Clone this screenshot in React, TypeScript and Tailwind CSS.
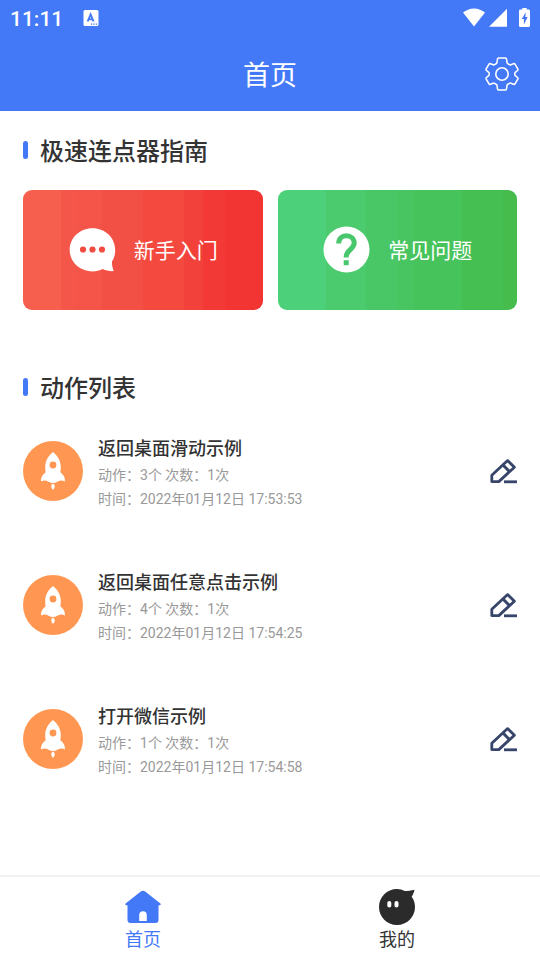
import { useState } from "react";

type Action = {
  id: number;
  title: string;
  steps: number;
  times: number;
  date: string;
};

const actions: Action[] = [
  { id: 1, title: "返回桌面滑动示例", steps: 3, times: 1, date: "2022年01月12日 17:53:53" },
  { id: 2, title: "返回桌面任意点击示例", steps: 4, times: 1, date: "2022年01月12日 17:54:25" },
  { id: 3, title: "打开微信示例", steps: 1, times: 1, date: "2022年01月12日 17:54:58" },
];

function StatusBar() {
  return (
    <div className="flex h-9 items-center justify-between px-2.5">
      <div className="flex items-center gap-5">
        <span className="pt-0.5 text-[21px] leading-8 font-medium">11:11</span>
        <svg className="h-4 w-4" viewBox="0 0 16 16">
          <rect x="0.5" width="15" height="16" rx="1.5" fill="#fff" />
          <path
            d="M4.6 11.5 7.6 4.5 10.6 11.5M5.6 9.4h4"
            fill="none"
            stroke="#4379f6"
            strokeWidth="1.9"
          />
          <path d="M8 13.6h1.3v1.2H8zM10.4 13.6h1.3v1.2h-1.3zM12.8 13.6h1.3v1.2h-1.3z" fill="#4379f6" />
        </svg>
      </div>
      <div className="flex items-center">
        <svg className="mr-1 h-5 w-[22px]" viewBox="0 0 22 20" fill="#fff">
          <path d="M11 18.600 0 4.600C3 2 6.700.4 11 .4s8 1.600 11 4.200z" />
        </svg>
        <svg className="mr-3 h-5 w-[18px]" viewBox="0 0 18 20" fill="#fff">
          <path d="M18 .8v18H0z" />
        </svg>
        <svg className="h-5 w-[11px]" viewBox="0 0 11 20">
          <path
            d="M3.300 0h4.400v1.500h2q1.300 0 1.300 1.300v14.900q0 1.300-1.300 1.300H1.300Q0 19 0 17.700V2.800q0-1.300 1.300-1.300h2z"
            fill="#fff"
          />
          <path d="M6.800 4.200 2.700 11h2.200v5.600L8.600 9H6.300z" fill="#4379f6" />
        </svg>
      </div>
    </div>
  );
}

function GearIcon() {
  return (
    <svg
      className="h-[34px] w-[34px]"
      viewBox="0 0 34 34"
      fill="none"
      stroke="#fff"
      strokeWidth="1.6"
      strokeLinejoin="round"
    >
      <path d="M13.600 1h6.800q1 0 1.100 1l.5 3.500q.1.800.9 1.200l1.500.9q.7.400 1.500.1l2.600-1q1-.4 1.500.5l2.800 4.700q.5.900-.3 1.600l-2.200 1.900q-.6.500-.6 1.600t.6 1.600l2.200 1.900q.8.700.3 1.600L30 26.800q-.5.900-1.500.5l-2.600-1q-.8-.3-1.500.1l-1.500.9q-.8.400-.9 1.200l-.5 3.500q-.1 1-1.100 1h-6.800q-1 0-1.100-1l-.5-3.500q-.1-.8-.9-1.200l-1.500-.9q-.7-.4-1.500-.1l-2.600 1q-1 .4-1.500-.5l-2.800-4.700q-.5-.9.3-1.600l2.200-1.900q.6-.5.6-1.600t-.6-1.600l-2.200-1.900q-.8-.7-.3-1.600L4 7.200q.5-.9 1.500-.5l2.600 1q.8.300 1.500-.1l1.500-.9q.8-.4.9-1.200l.5-3.500q.1-1 1.100-1z" />
      <circle cx="17" cy="17" r="6.200" />
    </svg>
  );
}

function ChatIcon() {
  return (
    <svg className="h-12 w-12" viewBox="0 0 48 48">
      <path
        d="M24.500 2.200C11.700 2.200 1.700 11.800 1.700 23.900s10 21.500 22.800 21.500c3.800 0 7.200-.8 10.200-2.300 3 1.600 6.800 2.200 11.100 2-1.400-3.300-2-6.200-1.800-9.500 2.200-3.300 3.200-7.300 3.200-11.700 0-12.100-9.900-21.700-22.700-21.700z"
        fill="#fff"
      />
      <circle cx="15" cy="23.500" r="3.100" fill="#f24c42" />
      <circle cx="24.500" cy="23.500" r="3.100" fill="#f24c42" />
      <circle cx="34" cy="23.500" r="3.100" fill="#f24c42" />
    </svg>
  );
}

function QuestionIcon() {
  return (
    <svg className="h-12 w-12" viewBox="0 0 48 48">
      <circle cx="24.500" cy="23.500" r="23" fill="#fff" />
      <path
        d="M16.700 17.500c0-5 3.200-7.700 7.700-7.700s7.800 2.800 7.800 7.200c0 6.300-8 7-8 13.800v.8"
        fill="none"
        stroke="#49c76c"
        strokeWidth="5"
      />
      <path d="M21.700 34.200h5v5h-5z" fill="#49c76c" />
    </svg>
  );
}

function RocketIcon() {
  return (
    <svg className="h-[60px] w-[60px] shrink-0" viewBox="0 0 60 60">
      <circle cx="30" cy="30" r="30" fill="#ff9752" />
      <path
        d="M30 11c-4.500 3.600-7.800 9-7.800 15 0 2.200.2 3.500.5 5.200-3.300 2.600-4.700 4.800-4.700 9.300 2.600-1.500 5-1.300 7.600.2 1.400.8 2.800 1.200 4.400 1.200s3-.4 4.400-1.200c2.600-1.500 5-1.700 7.600-.2 0-4.500-1.400-6.700-4.700-9.300.3-1.700.5-3 .5-5.200 0-6-3.300-11.400-7.800-15z"
        fill="#fff"
      />
      <circle cx="30" cy="24" r="3.400" fill="#ff9752" />
      <path d="M30 42.500c2.400 1.400 2.400 3.600 0 6.400-2.400-2.800-2.400-5 0-6.400z" fill="#fff" />
    </svg>
  );
}

function EditIcon() {
  return (
    <svg className="h-7 w-7" viewBox="0 0 28 28" fill="none" stroke="#364569" strokeWidth="2.800">
      <path d="M18.600 3.600 25.400 10.200 9.800 24.600H2.800V18.300z" strokeLinejoin="round" />
      <path d="M14 8 20.600 14.600" strokeWidth="3" />
      <path d="M15 24.800h13" />
    </svg>
  );
}

function HomeIcon() {
  return (
    <svg className="h-9 w-9" viewBox="0 0 36 36">
      <path
        d="M15.800 2.600q2.200-1.700 4.400 0L35.400 14.500q1 1.500-.8 1.800H33.500V31q0 3-3 3h-25q-3 0-3-3V16.300H1.400Q-.4 16 .6 14.500z"
        fill="#4379f6"
      />
      <path d="M14.200 32v-6a3.800 3.800 0 0 1 7.600 0v6z" fill="#fff" />
    </svg>
  );
}

function MineIcon() {
  return (
    <svg className="h-9 w-9" viewBox="0 0 36 36">
      <path
        d="M18 0c3 0 5.400.7 7.700 2C29 2 32 1.600 35.500.8c-.6 2.800-1.500 5-2.900 7C35 10.700 36 14.200 36 18c0 10-8 18-18 18S0 28 0 18 8 0 18 0z"
        fill="#2b2b2b"
      />
      <rect x="8.300" y="12" width="4" height="6.500" rx="2" fill="#fff" />
      <rect x="15.500" y="12" width="4" height="6.500" rx="2" fill="#fff" />
    </svg>
  );
}

function SectionTitle({ children }: { children: string }) {
  return (
    <h2 className="flex items-center gap-3 text-2xl font-medium">
      <span className="h-[18px] w-[5px] rounded-full bg-[#4379f6]" />
      <span className="pt-1 leading-8">{children}</span>
    </h2>
  );
}

export default function App() {
  const [tab, setTab] = useState("home");

  return (
    <div className="flex min-h-screen flex-col bg-white font-['Roboto','Noto_Sans_CJK_SC',sans-serif] text-[#333333]">
      <header className="bg-[#4379f6] text-white">
        <StatusBar />
        <div className="grid h-[75px] grid-cols-[1fr_auto_1fr] items-center px-[21px]">
          <h1 className="col-start-2 pt-1 text-[27px] leading-9">首页</h1>
          <button className="justify-self-end" aria-label="设置">
            <GearIcon />
          </button>
        </div>
      </header>

      <main className="flex-1 px-[23px] pt-[21px]">
        <SectionTitle>极速连点器指南</SectionTitle>

        {/* Guide cards */}
        <div className="mt-[22px] grid grid-cols-2 gap-[15px] text-[21px] text-white">
          <button className="flex h-[120px] items-center justify-center gap-[18px] rounded-[9px] bg-[linear-gradient(90deg,#f65e4e_16%,#f4574a_16%_22%,#f55548_22%_33%,#f35045_33%_50%,#f4493f_50%_67%,#f2413b_67%_75%,#f23935_75%_84%,#f23432_84%)]">
            <ChatIcon />
            <span className="pt-1">新手入门</span>
          </button>
          <button className="flex h-[120px] items-center justify-center gap-[18px] rounded-[9px] bg-[linear-gradient(90deg,#4dd07a_20%,#4bca6e_20%_37%,#49c767_37%_50%,#48c560_50%_57%,#47c35b_57%_77%,#46bf52_77%_94%,#45bc4c_94%)]">
            <QuestionIcon />
            <span className="pt-1">常见问题</span>
          </button>
        </div>

        <div className="mt-[59px]">
          <SectionTitle>动作列表</SectionTitle>
        </div>

        {/* Action list */}
        <ul className="mt-[26px] flex flex-col gap-[54px]">
          {actions.map((action) => (
            <li key={action.id} className="flex items-center gap-[15px]">
              <RocketIcon />
              <div className="flex-1">
                <h3 className="pt-1 text-lg leading-7 font-medium">{action.title}</h3>
                <p className="text-sm leading-6 text-[#999999]">
                  动作：{action.steps}个 次数：{action.times}次
                </p>
                <p className="text-sm leading-6 text-[#999999]">时间：{action.date}</p>
              </div>
              <button aria-label="编辑">
                <EditIcon />
              </button>
            </li>
          ))}
        </ul>
      </main>

      <nav className="grid h-[85px] grid-cols-2 border-t-2 border-[#f2f2f2] px-4 pt-3 text-lg leading-[30px]">
        <button
          className={`flex flex-col items-center ${tab === "home" ? "text-[#4379f6]" : ""}`}
          onClick={() => setTab("home")}
        >
          <HomeIcon />
          <span>首页</span>
        </button>
        <button
          className={`flex flex-col items-center ${tab === "mine" ? "text-[#4379f6]" : ""}`}
          onClick={() => setTab("mine")}
        >
          <MineIcon />
          <span>我的</span>
        </button>
      </nav>
    </div>
  );
}
